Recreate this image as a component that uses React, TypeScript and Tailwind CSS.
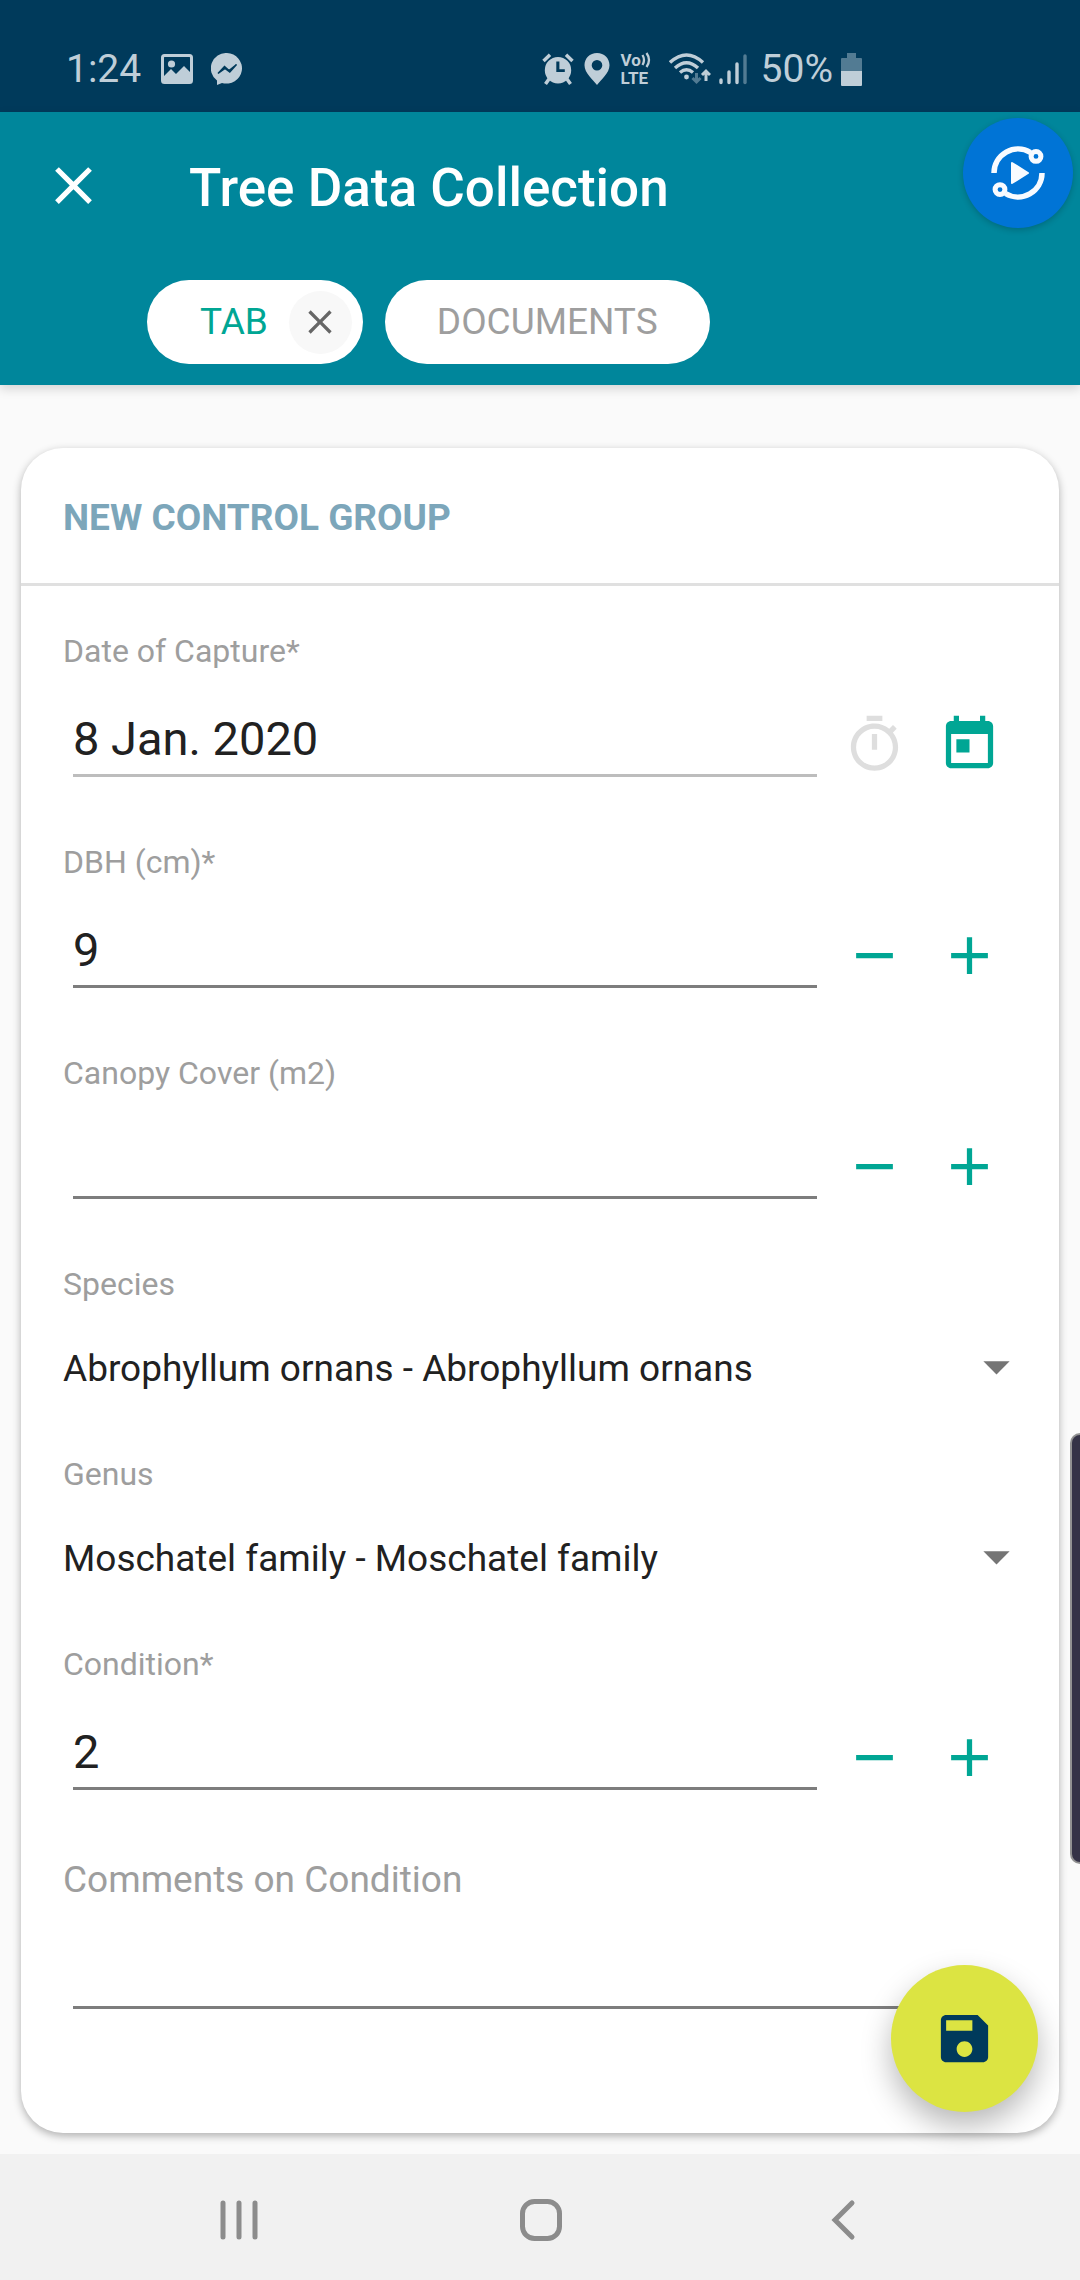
import { useState } from "react";
import type { ReactNode } from "react";

type IconProps = {
  path: string;
  className: string;
};

const Icon = ({ path, className }: IconProps) => (
  <svg viewBox="0 0 24 24" fill="currentColor" className={className} aria-hidden="true">
    <path d={path} />
  </svg>
);

const icons = {
  close:
    "M19 6.41L17.59 5 12 10.59 6.41 5 5 6.41 10.59 12 5 17.59 6.41 19 12 13.41 17.59 19 19 17.59 13.41 12z",
  timer:
    "M15 1H9v2h6V1zm-4 13h2V8h-2v6zm8.03-6.61l1.42-1.42c-.43-.51-.9-.99-1.41-1.41l-1.42 1.42C16.07 4.74 14.12 4 12 4c-4.97 0-9 4.03-9 9s4.02 9 9 9 9-4.03 9-9c0-2.12-.74-4.07-1.97-5.61zM12 20c-3.87 0-7-3.13-7-7s3.13-7 7-7 7 3.13 7 7-3.13 7-7 7z",
  today:
    "M19 3h-1V1h-2v2H8V1H6v2H5c-1.11 0-1.99.9-1.99 2L3 19c0 1.1.89 2 2 2h14c1.1 0 2-.9 2-2V5c0-1.1-.9-2-2-2zm0 16H5V8h14v11zM7 10h5v5H7z",
  minus: "M19 13H5v-2h14v2z",
  plus: "M19 13h-6v6h-2v-6H5v-2h6V5h2v6h6v2z",
  arrow: "M7 10l5 5 5-5z",
  save: "M17 3H5c-1.11 0-2 .9-2 2v14c0 1.1.89 2 2 2h14c1.1 0 2-.9 2-2V7l-4-4zm-5 16c-1.66 0-3-1.34-3-3s1.34-3 3-3 3 1.34 3 3-1.34 3-3 3zm3-10H5V5h10v4z",
};

const StatusBar = () => (
  <div className="flex h-[112px] items-center justify-between bg-[#003a5b] pt-[26px] pl-[66px] pr-[218px] text-[39px] leading-[48px] text-[#bfced8]">
    <div className="flex items-center">
      <span>1:24</span>
      <svg viewBox="0 0 32 30" className="ml-[20px] h-[30px] w-[32px]">
        <rect x="1.5" y="1.5" width="29" height="27" rx="2" fill="none" stroke="currentColor" strokeWidth="3" />
        <circle cx="10.5" cy="10" r="3.6" fill="currentColor" />
        <path d="M3 22l7-7 5 5 8-8 7 7v9H3z" fill="currentColor" />
      </svg>
      <svg viewBox="0 0 32 32" className="ml-[18px] h-[32px] w-[32px]">
        <path d="M16 0a15.7 15.3 0 1 1-5 30l-5 2v-4.500A15.500 15.300 0 0 1 16 0z" fill="currentColor" />
        <path d="M7 20.500L13.500 13.500L18 17.500L25.500 11.500L18.800 19L14 15.500z" fill="#003a5b" stroke="#003a5b" strokeWidth="1.500" />
      </svg>
    </div>
    <div className="flex items-center">
      <svg viewBox="0 0 32 32" className="h-[32px] w-[32px]">
        <path
          fillRule="evenodd"
          d="M16 4a13.200 13.200 0 1 1 0 26.400A13.200 13.200 0 1 1 16 4zM14.300 8.500v10.500h8.500v-2.800h-5.400V8.500z"
          fill="currentColor"
        />
        <path d="M1.500 8L8 1.800M24 1.800L30.500 8M7 26l-3.500 5M25 26l3.500 5" stroke="currentColor" strokeWidth="3.500" />
      </svg>
      <svg viewBox="0 0 26 32" className="ml-[10px] h-[32px] w-[26px]">
        <path
          fillRule="evenodd"
          d="M13 0C5.800 0 .500 5.400.500 12.300C.500 20 9 27 13 32c4-5 12.500-12 12.500-19.700C25.500 5.400 20.200 0 13 0zm0 7a5.300 5.300 0 1 1 0 10.600A5.300 5.300 0 1 1 13 7z"
          fill="currentColor"
        />
      </svg>
      <div className="ml-[11px] flex w-[34px] flex-col text-[17px] leading-[18px] font-bold">
        <span className="flex items-center">
          Vo
          <svg viewBox="0 0 10 16" className="h-[16px] w-[10px] shrink-0">
            <path d="M1.500 3q3 5 0 10M5.500 1q5 7 0 14" fill="none" stroke="currentColor" strokeWidth="2.300" />
          </svg>
        </span>
        <span>LTE</span>
      </div>
      <svg viewBox="0 0 42 32" className="ml-[14px] h-[32px] w-[42px]">
        <path d="M1 9.500q16.500-15 33 0M6 15q11.500-10.500 23 0M11 19.500q6.500-5.500 13 0" fill="none" stroke="currentColor" strokeWidth="3.400" />
        <circle cx="17.500" cy="24" r="2.400" fill="currentColor" />
        <path d="M27.500 20v9M23.500 25l4 4 4-4" fill="none" stroke="#527b93" strokeWidth="3" />
        <path d="M37 28v-8M33 22l4-4 4 4" fill="none" stroke="currentColor" strokeWidth="3" />
      </svg>
      <svg viewBox="0 0 28 32" className="ml-[8px] h-[32px] w-[28px]">
        <path d="M2 27v2.500M10 19v10.500M18 11v18.500" stroke="currentColor" strokeWidth="3.400" strokeLinecap="round" />
        <path d="M26 3v26.500" stroke="#527b93" strokeWidth="3.400" strokeLinecap="round" />
      </svg>
      <span className="ml-[14px]">50%</span>
      <svg viewBox="0 0 21 33" className="ml-[8px] h-[33px] w-[21px]">
        <path d="M6 0h9v5h5q1 0 1 1v12H0V6q0-1 1-1h5z" fill="#527b93" />
        <path d="M0 18h21v14q0 1-1 1H1q-1 0-1-1z" fill="currentColor" />
      </svg>
    </div>
  </div>
);

const Header = () => (
  <header className="relative z-10 bg-[#00869b] pt-[42px] pb-[21px] shadow-[0_4px_10px_rgba(0,0,0,0.15)]">
    <div className="flex h-[63px] items-end pl-[42px] text-white">
      <button aria-label="Close form" className="h-[63px] w-[63px]">
        <Icon path={icons.close} className="h-full w-full" />
      </button>
      <h1 className="ml-[84px] text-[53px] leading-[58px] font-medium">Tree Data Collection</h1>
    </div>

    <div className="mt-[63px] flex gap-[22px] pl-[147px] text-[37px]">
      <div className="flex h-[84px] items-center rounded-full bg-white pr-[11px] pl-[53px]">
        <button className="text-[#00a694]">TAB</button>
        <button
          aria-label="Close tab"
          className="ml-[21px] flex h-[63px] w-[63px] items-center justify-center rounded-full bg-[#f8f8f8] text-[#666666]"
        >
          <Icon path={icons.close} className="h-[40px] w-[40px]" />
        </button>
      </div>
      <button className="h-[84px] rounded-full bg-white px-[52px] text-[#9e9e9e]">DOCUMENTS</button>
    </div>

    <button
      aria-label="Screen recorder"
      className="absolute top-[6px] right-[7px] flex h-[110px] w-[110px] items-center justify-center rounded-full bg-[#0074d6] shadow-[0_2px_6px_rgba(0,0,0,0.2)]"
    >
      <svg viewBox="-28 -28 56 56" className="h-[56px] w-[56px]" fill="none" stroke="#f8fbff">
        <path d="M-24 0A24 24 0 0 1 12.500-20.500M24 0A24 24 0 0 1-12.500 20.500" strokeWidth="5.500" />
        <circle cx="18" cy="-16.600" r="4.900" strokeWidth="5" />
        <circle cx="-18" cy="16.600" r="4.900" strokeWidth="5" />
        <path d="M-6-10L10 0L-6 10z" fill="#f8fbff" strokeWidth="2" strokeLinejoin="round" />
      </svg>
    </button>
  </header>
);

type TextFieldProps = {
  id: string;
  label: string;
  value: string;
  onChange: (value: string) => void;
  muted?: boolean;
  children: ReactNode;
};

const TextField = ({ id, label, value, onChange, muted, children }: TextFieldProps) => (
  <div className="mb-[65px]">
    <label htmlFor={id} className="block text-[32px] leading-[40px] text-[#9e9e9e]">
      {label}
    </label>
    <div className="mt-[31px] flex items-center pr-[27px] pl-[10px]">
      <input
        id={id}
        type="text"
        value={value}
        onChange={(e) => onChange(e.target.value)}
        className={`h-[75px] min-w-0 flex-1 border-b-3 bg-transparent text-[47px] text-[#212121] outline-none ${
          muted ? "border-[#bdbdbd]" : "border-[#7d7d7d]"
        }`}
      />
      <div className="ml-[26px] flex gap-[32px] self-end pb-px text-[#00a694]">{children}</div>
    </div>
  </div>
);

type NumberFieldProps = {
  id: string;
  label: string;
  initial: string;
};

const NumberField = ({ id, label, initial }: NumberFieldProps) => {
  const [value, setValue] = useState(initial);

  const step = (amount: number) => setValue(String(Number(value) + amount));

  return (
    <TextField id={id} label={label} value={value} onChange={setValue}>
      <button aria-label={`Decrease ${label}`} onClick={() => step(-1)}>
        <Icon path={icons.minus} className="h-[63px] w-[63px]" />
      </button>
      <button aria-label={`Increase ${label}`} onClick={() => step(1)}>
        <Icon path={icons.plus} className="h-[63px] w-[63px]" />
      </button>
    </TextField>
  );
};

type SelectFieldProps = {
  id: string;
  label: string;
  options: string[];
};

const SelectField = ({ id, label, options }: SelectFieldProps) => (
  <div className="mb-[54px]">
    <label htmlFor={id} className="block text-[32px] leading-[40px] text-[#9e9e9e]">
      {label}
    </label>
    <div className="relative mt-[31px]">
      <select
        id={id}
        className="block h-[65px] w-full appearance-none bg-transparent pt-[3px] pr-[63px] text-[37px] text-[#212121] outline-none"
      >
        {options.map((option) => (
          <option key={option}>{option}</option>
        ))}
      </select>
      <Icon
        path={icons.arrow}
        className="pointer-events-none absolute top-0 right-0 h-[63px] w-[63px] text-[#757575]"
      />
    </div>
  </div>
);

const TreeForm = () => {
  const [date, setDate] = useState("8 Jan. 2020");
  const [comments, setComments] = useState("");

  return (
    <section className="rounded-[42px] bg-white shadow-[0_3px_8px_rgba(0,0,0,0.3)]">
      <div className="flex h-[138px] items-center border-b-3 border-[#e0e0e0] px-[42px] pt-[4px]">
        <h2 className="text-[37px] leading-[48px] font-bold text-[#7ca6ba]">NEW CONTROL GROUP</h2>
      </div>

      <form className="pt-[45px] pr-[31px] pb-[124px] pl-[42px]" onSubmit={(e) => e.preventDefault()}>
        <TextField id="date" label="Date of Capture*" value={date} onChange={setDate} muted>
          <button aria-label="Set to now" className="text-[#dedede]">
            <Icon path={icons.timer} className="h-[63px] w-[63px]" />
          </button>
          <button aria-label="Pick a date">
            <Icon path={icons.today} className="h-[63px] w-[63px]" />
          </button>
        </TextField>
        <NumberField id="dbh" label="DBH (cm)*" initial="9" />
        <NumberField id="canopy" label="Canopy Cover (m2)" initial="" />
        <SelectField id="species" label="Species" options={["Abrophyllum ornans - Abrophyllum ornans"]} />
        <SelectField id="genus" label="Genus" options={["Moschatel family - Moschatel family"]} />
        <NumberField id="condition" label="Condition*" initial="2" />

        <label htmlFor="comments" className="block text-[37px] leading-[50px] text-[#9e9e9e]">
          Comments on Condition
        </label>
        <div className="mt-[29px] flex pr-[27px] pl-[10px]">
          <input
            id="comments"
            type="text"
            value={comments}
            onChange={(e) => setComments(e.target.value)}
            className="h-[75px] min-w-0 flex-1 border-b-3 border-[#7d7d7d] bg-transparent text-[47px] text-[#212121] outline-none"
          />
        </div>
      </form>
    </section>
  );
};

const NavBar = () => (
  <nav className="grid h-[126px] grid-cols-3 bg-[#f1f1f1] pt-[6px] pr-[86px] pl-[88px] text-[#8c8c8c]">
    <button aria-label="Recent apps" className="flex items-center justify-center">
      <svg viewBox="0 0 42 42" className="h-[42px] w-[42px]" stroke="currentColor" strokeWidth="5" strokeLinecap="round">
        <path d="M5 4v34M21 4v34M37 4v34" />
      </svg>
    </button>
    <button aria-label="Home" className="flex items-center justify-center">
      <svg viewBox="0 0 42 42" className="h-[42px] w-[42px]" fill="none" stroke="currentColor" strokeWidth="5">
        <rect x="2.500" y="2.500" width="37" height="37" rx="12" />
      </svg>
    </button>
    <button aria-label="Back" className="flex items-center justify-center">
      <svg
        viewBox="0 0 42 42"
        className="h-[42px] w-[42px]"
        fill="none"
        stroke="currentColor"
        strokeWidth="5"
        strokeLinecap="round"
      >
        <path d="M30 4L13 21L30 38" />
      </svg>
    </button>
  </nav>
);

const App = () => {
  return (
    <div className="relative flex min-h-screen flex-col overflow-hidden bg-[#fafafa] font-['Roboto',sans-serif]">
      <StatusBar />
      <Header />

      <main className="relative flex-1 px-[21px] pt-[63px] pb-[21px]">
        <TreeForm />
        <button
          aria-label="Save"
          className="absolute right-[42px] bottom-[42px] flex h-[147px] w-[147px] items-center justify-center rounded-full bg-[#dce442] text-[#003a5b] shadow-[0_14px_30px_rgba(0,0,0,0.28)]"
        >
          <Icon path={icons.save} className="h-[63px] w-[63px]" />
        </button>
      </main>

      <NavBar />

      {/* edge panel handle */}
      <div className="absolute top-[1433px] right-0 h-[431px] w-[10px] rounded-l-[12px] border-2 border-r-0 border-[#929292] bg-[#353347]" />
    </div>
  );
};

export default App;
